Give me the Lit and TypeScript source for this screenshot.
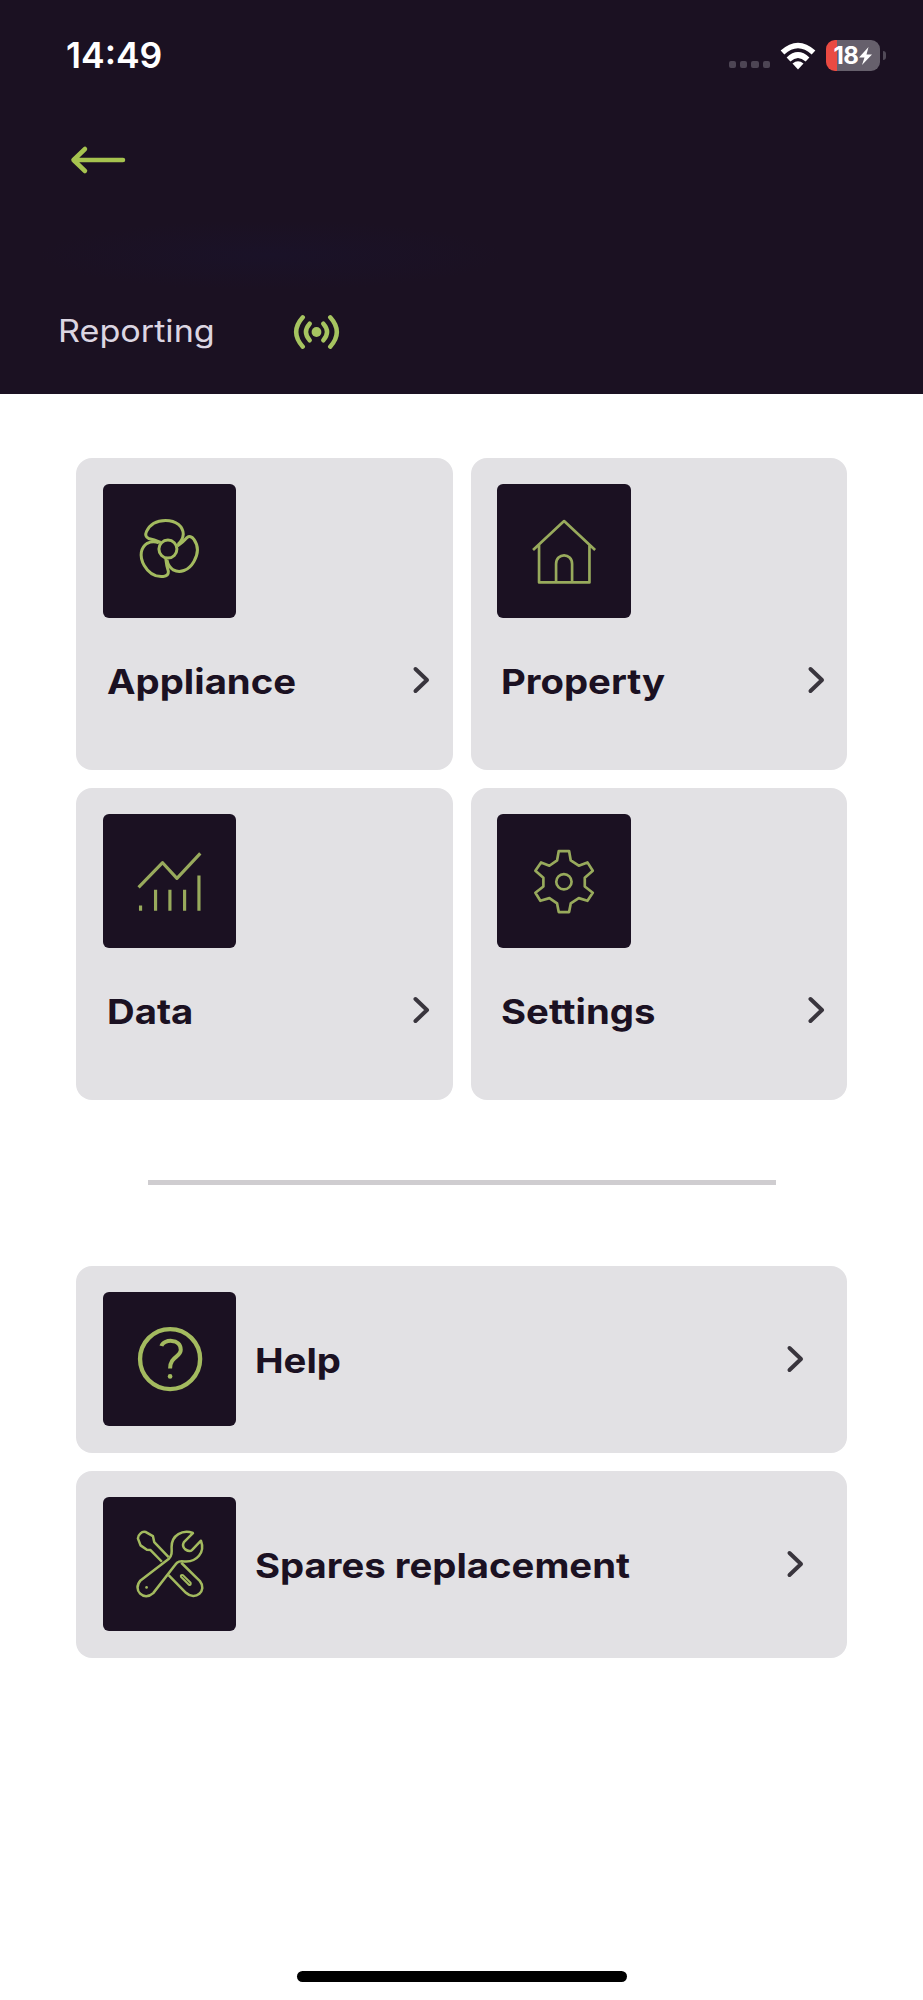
import { LitElement, html, css, svg, type TemplateResult } from "lit";
import { customElement, property } from "lit/decorators.js";

const blade = "M180 187Q160 178 144 175Q131 169 138 154C149 130 172 121 195 121C228 121 247 140 248 162Q247 180 232 193";

const icons: Record<string, TemplateResult> = {
  fan: svg`<g stroke-width="9">
    <circle cx="202" cy="207" r="27"/>
    <path d=${blade}/>
    <path transform="rotate(120 202 207)" d=${blade}/>
    <path transform="rotate(240 202 207)" d=${blade}/>
  </g>`,
  house: svg`<g class="thin" transform="translate(-102.5 -89)" stroke-width="8">
    <path d="M218 299L311 212L404 299M236 284V396H387V284M287 396V341C287 306 335 306 335 341V396"/>
  </g>`,
  chart: svg`<g class="thin" stroke-width="9.500">
    <path d="M114 232L186 158L229 205L299 130M120 286V302M165 239V302M208 239V302M252 239V302M295 196V302"/>
  </g>`,
  gear: svg`<g class="thin" transform="translate(2.500 0)" stroke-width="8">
    <path d="M190 123H221L226 151L250 167L276 157L292 182L268 203V229L292 248L276 272L250 264L226 280L221 306H190L185 280L162 264L135 272L120 248L144 229V203L120 182L137 157L162 167L185 151Z"/>
    <circle cx="205.500" cy="215" r="23"/>
  </g>`,
  help: svg`<g transform="translate(-119.500 -114)">
    <circle cx="328" cy="327" r="90" stroke-width="13"/>
    <path stroke-width="12" d="M302 288C308 267 360 264 360 299C360 322 328 318 328 355"/>
    <circle cx="328" cy="379" r="7" fill="currentColor" stroke="none"/>
  </g>`,
  tools: svg`<g transform="translate(0 -10)" stroke-width="7.500">
    <path d="M184 216L150 181L139 180L120 167L112 146Q112 138 120 131Q127 124 136 127L157 139L161 157L204 202"/>
    <path d="M277 130C246 119 213 136 213 172C214 189 214 196 205 207L120 272C94 301 130 336 158 310L224 225C231 214 238 214 251 215C289 218 314 188 301 153L274 181Q267 188 254 179Q243 169 250 157Z"/>
    <path d="M204 256L256 309C284 335 321 303 298 274L242 219"/>
    <path stroke-width="6" d="M241 261L265 285Q272 287 270 279L247 256Q239 254 241 261Z"/>
    <circle cx="138" cy="293" r="4" fill="currentColor" stroke="none"/>
  </g>`,
};

@customElement("icon-tile")
class IconTile extends LitElement {
  @property() name = "fan";
  static styles = css`
    :host { display: block; width: 133.5px; height: 133.5px; flex: none; border-radius: 6px; background: #1b1122; color: #a3ba5f; }
    svg { display: block; width: 100%; height: 100%; fill: none; stroke: currentColor; stroke-linejoin: round; }
    .thin { color: #98aa5c; }
    g { stroke: currentColor; }
  `;
  render() {
    return html`<svg viewBox="7.5 12 400 400">${icons[this.name]}</svg>`;
  }
}

const chevron = html`<svg class="chevron" viewBox="0 0 18 30"><path d="M3.500 4L15 15L3.500 26"/></svg>`;

@customElement("app-root")
class AppRoot extends LitElement {
  static styles = css`
    :host { display: flex; flex-direction: column; height: 2000px; background: #fff; color: #1b1122; font-family: Inter, "Liberation Sans", sans-serif; }
    * { box-sizing: border-box; }
    svg { display: block; fill: none; }
    header { height: 394px; background: #1b1122; color: #fff; display: flex; flex-direction: column; flex: none; }
    .status { display: flex; align-items: center; height: 111px; padding: 0 37px 0 66px; }
    .time { font-size: 35.500px; font-weight: 600; flex: 1; }
    .dots { display: flex; gap: 4px; margin: 18px 10px 0 0; }
    .dots i { width: 7.3px; height: 7.3px; border-radius: 2px; background: #4d4554; }
    .wifi { width: 36px; height: 30px; margin-right: 10px; }
    .battery { width: 54px; height: 31px; border-radius: 9px; display: flex; align-items: center; justify-content: center; gap: 1px; background: linear-gradient(90deg, #ea4a42 0 11px, #66606c 11px); font-weight: 700; font-size: 24px; letter-spacing: -.5px; }
    .battery svg { width: 13px; height: 20px; }
    .nub { width: 3px; height: 9px; margin-left: 3px; border-radius: 0 3px 3px 0; background: #514a58; }
    .back { width: 58px; height: 30px; margin: 34px 0 0 69px; }
    .name { width: 470px; height: 70px; margin: 44.500px 0 0 36px; background: radial-gradient(closest-side, #1a1228, #1b1122); }
    .report { display: flex; align-items: center; height: 48px; margin: 18px 0 0 58px; gap: 78px; color: #dcd6e2; }
    .report span { font-size: 30.500px; width: 157px; white-space: nowrap; transform: translateY(-1px) scaleX(1.12); transform-origin: 0 50%; }
    .signal { width: 47px; height: 36px; margin-top: 1px; }
    main { flex: 1; padding: 63.500px 76px 0; }
    .grid { display: grid; grid-template-columns: 1fr 1fr; gap: 18px; }
    .card, .row { background: #e2e1e4; border-radius: 16px; }
    .card { height: 312px; padding: 26.500px 22.500px 0 26.500px; }
    .line { display: flex; align-items: center; justify-content: space-between; margin-top: 40.500px; padding-left: 4px; height: 44px; }
    .label { font-size: 34.500px; font-weight: 700; line-height: 44px; margin-top: 3px; white-space: nowrap; transform-origin: 0 50%; transform: scaleX(1.11); }
    .chevron { width: 18px; height: 30px; stroke: #39353d; stroke-width: 4; stroke-linecap: round; stroke-linejoin: round; }
    hr { border: 0; height: 5px; width: 628px; margin: 80.500px auto; background: #cfcdd0; }
    .list { display: grid; gap: 18px; }
    .row { display: flex; align-items: center; height: 187px; padding: 0 43.500px 0 26.500px; }
    .row .label { margin-left: 18.500px; }
    .row .chevron { margin-left: auto; }
    .home { width: 330px; height: 11px; border-radius: 6px; background: #000; margin: 0 auto 18.500px; }
  `;
  render() {
    return html`
      <header>
        <div class="status">
          <div class="time">14:49</div>
          <div class="dots"><i></i><i></i><i></i><i></i></div>
          <svg class="wifi" viewBox="0 0 36 30" stroke="#fff" stroke-width="5.500"><path d="M2.500 11.500Q18 -2.500 33.500 11.500M8.500 18.500Q18 9.500 27.500 18.500"/><path d="M12.500 22.500Q18 18 23.500 22.500L18 28.500Z" fill="#fff" stroke="none"/></svg>
          <div class="battery"><span>18</span><svg viewBox="0 0 13 20"><path fill="#fff" d="M9.500 1L0 11.500H5.500L3 19L13 8.500H7.500Z"/></svg></div>
          <div class="nub"></div>
        </div>
        <svg class="back" viewBox="0 0 58 30" stroke="#a6c34f" stroke-width="4.500" stroke-linecap="round" stroke-linejoin="round"><path d="M54 15H4.500M16 4L4.500 15L16 26"/></svg>
        <div class="name"></div>
        <div class="report">
          <span>Reporting</span>
          <svg class="signal" viewBox="0 0 48 36" stroke="#a6c460" stroke-width="4.500" stroke-linecap="round"><circle cx="24" cy="18" r="5" fill="#a6c460" stroke="none"/><path d="M17 9.500Q9.500 18 17 26.500M31 9.500Q38.500 18 31 26.500M10 3Q-3.500 18 10 33M38 3Q51.500 18 38 33"/></svg>
        </div>
      </header>
      <main>
        <section class="grid">
          ${[["fan", "Appliance"], ["house", "Property"], ["chart", "Data"], ["gear", "Settings"]].map(
            ([icon, label]) => html`<div class="card"><icon-tile name=${icon}></icon-tile><div class="line"><span class="label">${label}</span>${chevron}</div></div>`
          )}
        </section>
        <hr />
        <section class="list">
          ${[["help", "Help"], ["tools", "Spares replacement"]].map(
            ([icon, label]) => html`<div class="row"><icon-tile name=${icon}></icon-tile><span class="label">${label}</span>${chevron}</div>`
          )}
        </section>
      </main>
      <div class="home"></div>
    `;
  }
}
